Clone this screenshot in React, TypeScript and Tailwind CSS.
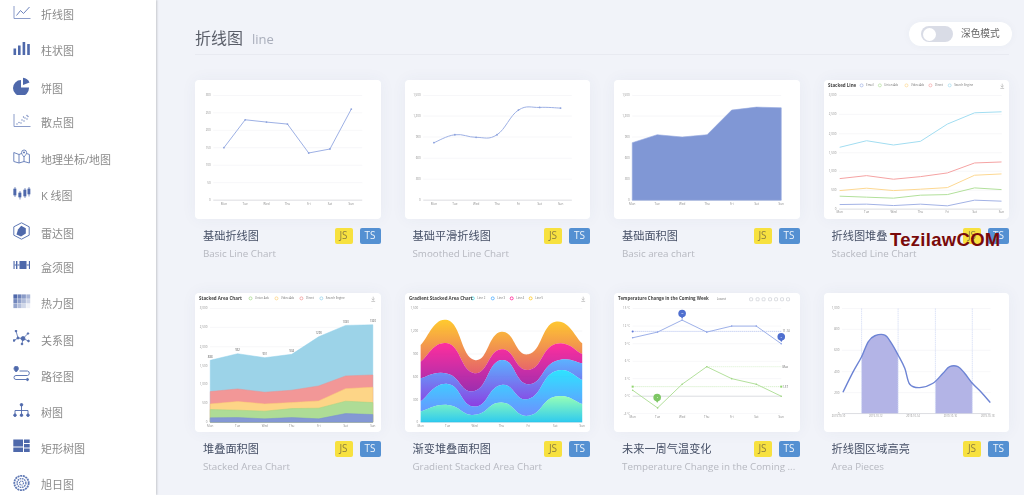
import type { ReactNode } from 'react'

type Pt = [number, number]

const days = ['Mon', 'Tue', 'Wed', 'Thu', 'Fri', 'Sat', 'Sun']

function zip(xs: number[], ys: number[]): Pt[] {
  return xs.map((x, i) => [x, ys[i]])
}

function linePath(pts: Pt[]) {
  return pts.map((p, i) => `${i ? 'L' : 'M'}${p[0]} ${p[1]}`).join(' ')
}

function smoothPath(pts: Pt[], k = 0.2) {
  let d = `M${pts[0][0]} ${pts[0][1]}`
  for (let i = 0; i < pts.length - 1; i++) {
    const p0 = pts[i - 1] ?? pts[i]
    const p1 = pts[i]
    const p2 = pts[i + 1]
    const p3 = pts[i + 2] ?? p2
    const c1x = p1[0] + (p2[0] - p0[0]) * k
    const c1y = p1[1] + (p2[1] - p0[1]) * k
    const c2x = p2[0] - (p3[0] - p1[0]) * k
    const c2y = p2[1] - (p3[1] - p1[1]) * k
    d += ` C${c1x} ${c1y} ${c2x} ${c2y} ${p2[0]} ${p2[1]}`
  }
  return d
}

function Grid({ ys, labels, x1, x2 }: { ys: number[]; labels: string[]; x1: number; x2: number }) {
  return (
    <g>
      {ys.map((y, i) => (
        <g key={y}>
          <line x1={x1} x2={x2} y1={y} y2={y} stroke={i === ys.length - 1 ? '#c4c6cc' : '#f1f2f5'} strokeWidth="0.6" />
          <text x={x1 - 2.5} y={y + 1} fontSize="3" fill="#8e8e8e" textAnchor="end">{labels[i]}</text>
        </g>
      ))}
    </g>
  )
}

function Days({ xs, y }: { xs: number[]; y: number }) {
  return (
    <g>
      {days.map((d, i) => (
        <text key={d} x={xs[i]} y={y} fontSize="3" fill="#8e8e8e" textAnchor="middle">{d}</text>
      ))}
    </g>
  )
}

function ChartSvg({ children }: { children: ReactNode }) {
  return (
    <svg viewBox="0 0 186 139" className="block w-full h-full">
      {children}
    </svg>
  )
}

function Legend({ title, items, x }: { title: string; items: [string, string, number][]; x: number }) {
  return (
    <g>
      {items.map(([name, color, ox]) => (
        <g key={name}>
          <circle cx={x + ox} cy="5.2" r="1.5" fill="none" stroke={color} strokeWidth="0.7" />
          <text x={x + ox + 4.5} y="6.2" fontSize="2.9" fill="#777">{name}</text>
        </g>
      ))}
      <text x="4" y="7" fontSize="4.5" fontWeight="700" fill="#444">{title}</text>
      <path d="M178.7 3.5V7M177.2 5.6L178.7 7L180.2 5.6M176.8 8.3H180.6" fill="none" stroke="#aaa" strokeWidth="0.6" />
    </g>
  )
}

function BasicLine() {
  const xs = [29, 50.3, 71.7, 92.7, 114, 135.3, 156.7]
  const pts = zip(xs, [67.7, 39.7, 42, 44, 73, 69, 29])
  return (
    <ChartSvg>
      <Grid x1={18.3} x2={167.7} ys={[15.3, 32.7, 50.3, 67.7, 85.3, 102.7, 120.3]} labels={['300', '250', '200', '150', '100', '50', '0']} />
      <Days xs={xs} y={124.8} />
      <path d={linePath(pts)} fill="none" stroke="#9db0e4" strokeWidth="1" />
      {pts.map((p) => <circle key={p[0]} cx={p[0]} cy={p[1]} r="0.9" fill="#8ea3dd" />)}
    </ChartSvg>
  )
}

function SmoothLine() {
  const xs = [29, 50, 71.3, 92.3, 113.7, 135, 156]
  const pts = zip(xs, [62.7, 54.7, 57.3, 54.7, 30, 27.3, 28])
  return (
    <ChartSvg>
      <Grid x1={18.3} x2={167.3} ys={[15.3, 36, 57, 78.3, 99.3, 120.3]} labels={['1,500', '1,200', '900', '600', '300', '0']} />
      <Days xs={xs} y={124.8} />
      <path d={smoothPath(pts)} fill="none" stroke="#9db0e4" strokeWidth="1" />
      {pts.map((p) => <circle key={p[0]} cx={p[0]} cy={p[1]} r="0.9" fill="#8ea3dd" />)}
    </ChartSvg>
  )
}

function BasicArea() {
  const xs = [18.3, 43.3, 68.3, 93.3, 118, 143, 167.7]
  const pts = zip(xs, [62.7, 54.7, 57, 54.7, 30, 27, 27.7])
  return (
    <ChartSvg>
      <Grid x1={18.3} x2={167.7} ys={[15.3, 36, 57, 78.3, 99.3, 120.3]} labels={['1,500', '1,200', '900', '600', '300', '0']} />
      <Days xs={xs} y={124.8} />
      <path d={`${linePath(pts)} L167.7 120.3 L18.3 120.3 Z`} fill="#8097d5" stroke="#93a7df" strokeWidth="0.6" />
    </ChartSvg>
  )
}

const stackGrid = [15.3, 34.3, 53.7, 72.7, 91.3, 110.3, 129.3]
const stackLabels = ['3,000', '2,500', '2,000', '1,500', '1,000', '500', '0']

function StackedLine() {
  const xs = [15.7, 42.7, 69.7, 96.7, 123.7, 151, 178]
  const series: [string, number[]][] = [
    ['#a2ddf1', [67.3, 60.7, 65, 61.3, 44, 32.7, 31.7]],
    ['#f5a3a3', [98.7, 95.7, 99.3, 96.7, 93, 83, 82]],
    ['#fdd892', [110.7, 108.3, 110.7, 109.3, 107.7, 95.3, 94]],
    ['#b2e09b', [116.3, 117.3, 118.3, 115.3, 114.7, 108, 109.7]],
    ['#a2b2e5', [124.7, 124.3, 125.7, 124.3, 126, 120.3, 121.3]],
  ]
  return (
    <ChartSvg>
      <Legend
        title="Stacked Line"
        x={37.7}
        items={[
          ['Email', '#a2b2e5', 0],
          ['Union Ads', '#b2e09b', 18.3],
          ['Video Ads', '#fdd892', 45],
          ['Direct', '#f5a3a3', 69],
          ['Search Engine', '#a2ddf1', 88.3],
        ]}
      />
      <Grid x1={15} x2={178.3} ys={stackGrid} labels={stackLabels} />
      <Days xs={xs} y={133.6} />
      {series.map(([color, ys]) => (
        <path key={color} d={linePath(zip(xs, ys))} fill="none" stroke={color} strokeWidth="1" />
      ))}
    </ChartSvg>
  )
}

function StackedArea() {
  const xs = [15.3, 42.7, 70, 97, 124, 151, 178.3]
  const series: [string, string, number[]][] = [
    ['#9cd3e8', '#8fd0ea', [67.3, 60.7, 64.7, 61.3, 43.7, 32.3, 31.7]],
    ['#f29797', '#ee8f8f', [98.7, 96, 99.3, 97.3, 93, 83, 82]],
    ['#fdd587', '#fdcf78', [111, 108.7, 111, 109.7, 108, 95.7, 94.3]],
    ['#aedc96', '#9fd685', [116.7, 117.3, 118.3, 115.7, 115.3, 108.3, 109.7]],
    ['#8498d4', '#7a90d2', [125, 124.7, 126, 124.7, 126, 120.7, 121.7]],
  ]
  const tops = ['888', '932', '901', '934', '1290', '1330', '1320']
  return (
    <ChartSvg>
      <Legend
        title="Stacked Area Chart"
        x={46}
        items={[
          ['Union Ads', '#9fd685', 9.7],
          ['Video Ads', '#fdcf78', 35.7],
          ['Direct', '#ee8f8f', 60.7],
          ['Search Engine', '#8fd0ea', 80.7],
        ]}
      />
      <Grid x1={15} x2={178.3} ys={stackGrid} labels={stackLabels} />
      <Days xs={xs} y={134} />
      {series.map(([fill, stroke, ys]) => (
        <path key={fill} d={`${linePath(zip(xs, ys))} L178.3 129.3 L15.3 129.3 Z`} fill={fill} stroke={stroke} strokeWidth="0.5" />
      ))}
      {tops.map((t, i) => (
        <text key={t} x={xs[i]} y={series[0][2][i] - 2.5} fontSize="2.8" fill="#555" textAnchor="middle">{t}</text>
      ))}
    </ChartSvg>
  )
}

function GradientArea() {
  const xs = [15.7, 42.7, 69.7, 96.7, 123.7, 150.7, 177.7]
  const layers: [string, string, string, number[]][] = [
    ['ga', '#ffbf00', '#e03e4c', [52, 27, 67, 38.7, 61.3, 28.7, 50.3]],
    ['gb', '#ff0087', '#87009d', [68.7, 50.3, 80.3, 56.3, 77, 51, 61]],
    ['gc', '#37a2ff', '#7415db', [85.3, 80.7, 98, 67, 91.3, 68.3, 70.3]],
    ['gd', '#00ddff', '#4d77ff', [108.7, 91, 113.7, 92, 106, 78.3, 87]],
    ['ge', '#80ffa5', '#01bfec', [118.7, 112, 122, 109.7, 123, 103.7, 111]],
  ]
  const band = (i: number) => {
    const top = smoothPath(zip(xs, layers[i][3]), 0.25)
    const next = layers[i + 1]
    if (!next) return `${top} L177.7 129.3 L15.7 129.3 Z`
    const under = zip(xs, next[3]).reverse()
    return `${top} L${smoothPath(under, 0.25).slice(1)} Z`
  }
  return (
    <ChartSvg>
      <defs>
        {layers.map(([id, a, b]) => (
          <linearGradient key={id} id={id} x1="0" x2="0" y1="0" y2="1">
            <stop offset="0" stopColor={a} />
            <stop offset="1" stopColor={b} />
          </linearGradient>
        ))}
      </defs>
      <Legend
        title="Gradient Stacked Area Chart"
        x={62}
        items={[
          ['Line 2', '#37d5e8', 6],
          ['Line 3', '#37a2ff', 26],
          ['Line 4', '#ff0087', 45],
          ['Line 5', '#ffbf00', 64],
        ]}
      />
      <Grid x1={15.7} x2={177.7} ys={[15.3, 38, 61, 83.7, 106.7, 129.3]} labels={['1,500', '1,200', '900', '600', '300', '0']} />
      <Days xs={xs} y={134} />
      {layers.map(([id], i) => (
        <path key={id} d={band(i)} fill={`url(#${id})`} fillOpacity="0.82" />
      ))}
    </ChartSvg>
  )
}

function Pin({ x, y, color, label }: { x: number; y: number; color: string; label: string }) {
  return (
    <g>
      <path d={`M${x - 3.4} ${y - 1} L${x} ${y + 5.5} L${x + 3.4} ${y - 1} Z`} fill={color} />
      <circle cx={x} cy={y} r="3.8" fill={color} />
      <text x={x} y={y + 0.9} fontSize="2.4" fill="#fff" textAnchor="middle">{label}</text>
    </g>
  )
}

function Temperature() {
  const xs = [18.7, 43.7, 68.3, 93, 118, 142.7, 167.7]
  const high = zip(xs, [44.7, 39, 27, 39, 33, 33, 50.7])
  const low = zip(xs, [97.3, 115, 91.3, 73.7, 85.7, 91.3, 103.3])
  const ys = [15.3, 33, 50.7, 68.3, 85.7, 103.3, 120.7]
  const labels = ['15 °C', '12 °C', '9 °C', '6 °C', '3 °C', '0 °C', '-3 °C']
  return (
    <ChartSvg>
      <text x="4" y="7" fontSize="4.4" fontWeight="700" fill="#444">Temperature Change in the Coming Week</text>
      <text x="103" y="6.6" fontSize="2.8" fill="#777">Lowest</text>
      <g fill="none" stroke="#b9bcc4" strokeWidth="0.5">
        {[136, 142.5, 148.5, 155, 161, 167, 173].map((x) => <rect key={x} x={x} y="4.6" width="3" height="3" rx="0.6" />)}
      </g>
      {ys.map((y, i) => (
        <g key={y}>
          <line x1={18.7} x2={167.7} y1={y} y2={y} stroke={i === 5 ? '#c4c6cc' : '#f1f2f5'} strokeWidth="0.6" />
          <text x="16" y={y + 1} fontSize="2.8" fill="#8e8e8e" textAnchor="end">{labels[i]}</text>
        </g>
      ))}
      <Days xs={xs} y={125} />
      <line x1="18.7" x2="167.7" y1="38.3" y2="38.3" stroke="#8ea3e6" strokeWidth="0.7" strokeDasharray="1 1" />
      <circle cx="18.7" cy="38.3" r="1" fill="#5f79d6" />
      <text x="169" y="39" fontSize="2.8" fill="#666">11.14</text>
      <line x1="18.7" x2="167.7" y1="93.7" y2="93.7" stroke="#b7e3a3" strokeWidth="0.7" strokeDasharray="1 1" />
      <rect x="17.7" y="92.7" width="2" height="2" fill="#91d56f" />
      <rect x="166.7" y="92.7" width="2" height="2" fill="#91d56f" />
      <text x="169" y="94.7" fontSize="2.8" fill="#666">1.57</text>
      <line x1="93" x2="167.7" y1="73.7" y2="73.7" stroke="#c8eab8" strokeWidth="0.7" strokeDasharray="1 1" />
      <text x="169" y="74.7" fontSize="2.8" fill="#666">Max</text>
      <path d={linePath(high)} fill="none" stroke="#9db0e8" strokeWidth="1" />
      <path d={linePath(low)} fill="none" stroke="#b3e09c" strokeWidth="1" />
      {high.map((p) => <circle key={p[0]} cx={p[0]} cy={p[1]} r="0.8" fill="#8ea3e6" />)}
      {low.map((p) => <circle key={p[0]} cx={p[0]} cy={p[1]} r="0.8" fill="#9fd685" />)}
      <Pin x={68.3} y={20.3} color="#4f6fcf" label="13" />
      <Pin x={167.7} y={43.7} color="#4f6fcf" label="9" />
      <Pin x={43.3} y={104.7} color="#7ec765" label="-2" />
    </ChartSvg>
  )
}

function AreaPieces() {
  const pts: Pt[] = [[19, 99.3], [29.3, 78.7], [37.7, 63.7], [44.3, 48.7], [51, 42.7], [61, 42], [67.7, 50.3], [74.3, 62], [81, 75.3], [86, 91.3], [96, 94.7], [109.3, 90.3], [119.3, 80.3], [126, 73.7], [134.3, 73.7], [141, 80.3], [148.7, 90.3], [157.7, 99.3], [166.7, 109.7]]
  const d = smoothPath(pts, 0.17)
  return (
    <ChartSvg>
      <defs>
        <clipPath id="pieces">
          <path d={`${d} L166.7 120.7 L19 120.7 Z`} />
        </clipPath>
      </defs>
      <Grid x1={18} x2={167} ys={[15.3, 36.3, 57.3, 78.7, 99.7, 120.7]} labels={['1,000', '800', '600', '400', '200', '0']} />
      {['2019-10-10', '2019-10-12', '2019-10-14', '2019-10-16', '2019-10-18'].map((t, i) => (
        <text key={t} x={14.5 + i * 37.4} y="124.6" fontSize="2.6" fill="#8e8e8e" textAnchor="middle">{t}</text>
      ))}
      <g clipPath="url(#pieces)" fill="#b3b4e6">
        <rect x="37.7" y="15" width="36.6" height="106" />
        <rect x="111.7" y="15" width="37" height="106" />
      </g>
      {[37.7, 74.3, 111.7, 148.7].map((x) => (
        <line key={x} x1={x} x2={x} y1="15.3" y2="120.7" stroke="#d3dcf5" strokeWidth="0.8" strokeDasharray="1.5 0.6" />
      ))}
      <path d={d} fill="none" stroke="#6d84d4" strokeWidth="1.4" />
    </ChartSvg>
  )
}

const iconColor = '#4f69ab'

function Axes() {
  return <path d="M1 1V13.5H17.5" fill="none" stroke="#7f92c4" strokeWidth="0.9" />
}

const sidebarItems: { name: string; icon: ReactNode; textClass?: string }[] = [
  {
    name: '折线图',
    icon: (
      <>
        <Axes />
        <path d="M3.5 10.5L7.5 5.5L10.5 8.5L16.5 2" fill="none" stroke="#6c82bb" strokeWidth="1" />
      </>
    ),
  },
  {
    name: '柱状图',
    icon: (
      <g fill={iconColor}>
        <rect x="0.5" y="7.5" width="2.6" height="6.5" />
        <rect x="5" y="4.5" width="2.6" height="9.5" />
        <rect x="9.6" y="1" width="2.6" height="13" />
        <rect x="14.2" y="3" width="2.6" height="11" />
      </g>
    ),
  },
  {
    name: '饼图',
    textClass: 'pt-[3px]',
    icon: (
      <g fill={iconColor}>
        <path d="M8 2.4V10H16A8 8 0 1 1 8 2.4Z" transform="translate(0 0.6)" />
        <path d="M10 0.8A8 8 0 0 1 16.5 5.5L10 8Z" />
      </g>
    ),
  },
  {
    name: '散点图',
    icon: (
      <>
        <Axes />
        <g fill="#6c82bb">
          {[[4, 11], [6, 9.5], [8, 10], [9, 7], [11, 8], [12, 5], [14, 6], [15, 3.5], [14, 2.5], [10.5, 4]].map(([x, y]) => (
            <circle key={`${x}-${y}`} cx={x} cy={y} r="0.65" />
          ))}
        </g>
      </>
    ),
  },
  {
    name: '地理坐标/地图',
    icon: (
      <g fill="none" stroke="#6079b5" strokeWidth="0.9">
        <path d="M0.8 3.5L6 5.5L11 3.5L16.4 5.5V14L11 12.5L6 14L0.8 12.5Z" />
        <path d="M6 5.5V14M11 8V12.5" />
        <path d="M11 8C9.4 6 8.6 5 8.6 3.5A2.5 2.5 0 0 1 13.6 3.5C13.6 5 12.6 6 11 8Z" fill="#fff" />
        <circle cx="11" cy="3.4" r="0.9" fill={iconColor} stroke="none" />
      </g>
    ),
  },
  {
    name: 'K 线图',
    icon: (
      <g fill={iconColor} stroke={iconColor} strokeWidth="0.7">
        <path d="M2 1V11M7 5V13.5M12 2V12M16 1V10.5" fill="none" />
        <rect x="0.8" y="3" width="2.2" height="6" />
        <rect x="5.8" y="7" width="2.2" height="4" />
        <rect x="10.8" y="4" width="2.2" height="6" />
        <rect x="14.9" y="3" width="2.1" height="5" />
      </g>
    ),
  },
  {
    name: '雷达图',
    textClass: 'pt-[4px]',
    icon: (
      <>
        <path d="M8.5 0.8L16.2 4.8V13.2L8.5 17.2L0.8 13.2V4.8Z" fill="none" stroke="#5f78b4" strokeWidth="1" />
        <path d="M8.2 3.8L12.8 6.2V11.5L8 14.6L3.5 12.5L5 7.5Z" fill={iconColor} />
      </>
    ),
  },
  {
    name: '盒须图',
    icon: (
      <g fill={iconColor}>
        <rect x="0.5" y="3" width="1.1" height="8" />
        <rect x="3" y="3" width="1.4" height="8" />
        <rect x="1.6" y="6.5" width="1.4" height="1" />
        <rect x="6.5" y="3" width="7" height="8" />
        <rect x="4.4" y="6.5" width="2.1" height="1" />
        <rect x="13.5" y="6.5" width="2.4" height="1" />
        <rect x="15.9" y="3" width="1.1" height="8" />
      </g>
    ),
  },
  {
    name: '热力图',
    icon: (
      <g fill={iconColor}>
        {[0, 1, 2, 3].flatMap((c) =>
          [0, 1, 2].map((r) => (
            <rect key={`${c}-${r}`} x={0.4 + c * 4.3} y={0.4 + r * 4.7} width="3.9" height="4.3" opacity={1 - c * 0.17 - r * 0.2} />
          )),
        )}
      </g>
    ),
  },
  {
    name: '关系图',
    icon: (
      <g fill={iconColor} stroke={iconColor} strokeWidth="0.8">
        <path d="M3 1L5 8L1 10.5M5 8L10 8.5L15 3.5M10 8.5L15.5 11M10 8.5L9 14" fill="none" />
        <circle cx="3" cy="1" r="0.9" />
        <circle cx="5" cy="8" r="1.1" />
        <circle cx="1" cy="10.5" r="0.9" />
        <circle cx="10" cy="8.5" r="2" />
        <circle cx="15" cy="3.5" r="0.8" />
        <circle cx="15.5" cy="11" r="0.9" />
        <circle cx="9" cy="14" r="0.9" />
      </g>
    ),
  },
  {
    name: '路径图',
    icon: (
      <g fill="none" stroke="#5f78b4" strokeWidth="1">
        <path d="M3.2 6C1.6 4.4 1 3.5 1 2.5A2.2 2.2 0 0 1 5.4 2.5C5.4 3.5 4.8 4.4 3.2 6Z" fill={iconColor} />
        <path d="M6.5 5H14.5A2.3 2.3 0 0 1 14.5 9.5H3A2 2 0 0 0 3 13.5H14" />
        <path d="M14 12L16 13.5L14 15Z" fill={iconColor} />
      </g>
    ),
  },
  {
    name: '树图',
    icon: (
      <g fill={iconColor} stroke={iconColor} strokeWidth="0.9">
        <path d="M8.5 2V12M2 12V7.5H15V12" fill="none" />
        <circle cx="8.5" cy="1.8" r="1.3" />
        <circle cx="2" cy="12.2" r="1.3" />
        <circle cx="8.5" cy="12.2" r="1.3" />
        <circle cx="15" cy="12.2" r="1.3" />
      </g>
    ),
  },
  {
    name: '矩形树图',
    icon: (
      <g fill={iconColor}>
        <rect x="0.3" y="0.5" width="9.7" height="7" />
        <rect x="11" y="0.5" width="5.7" height="3.5" />
        <rect x="11" y="5" width="5.7" height="3.5" />
        <rect x="0.3" y="8.5" width="9.7" height="4.5" />
        <rect x="11" y="9.5" width="5.7" height="3.5" />
      </g>
    ),
  },
  {
    name: '旭日图',
    icon: (
      <g fill="none" stroke="#6079b5">
        <circle cx="8.5" cy="8" r="7.2" strokeWidth="1.8" strokeDasharray="2 0.7" />
        <circle cx="8.5" cy="8" r="4.4" strokeWidth="1.4" strokeDasharray="1.6 0.7" />
        <circle cx="8.5" cy="8" r="2" strokeWidth="1.2" strokeDasharray="1.2 0.6" />
      </g>
    ),
  },
]

const cards: { title: string; sub: string; chart: ReactNode }[] = [
  { title: '基础折线图', sub: 'Basic Line Chart', chart: <BasicLine /> },
  { title: '基础平滑折线图', sub: 'Smoothed Line Chart', chart: <SmoothLine /> },
  { title: '基础面积图', sub: 'Basic area chart', chart: <BasicArea /> },
  { title: '折线图堆叠', sub: 'Stacked Line Chart', chart: <StackedLine /> },
  { title: '堆叠面积图', sub: 'Stacked Area Chart', chart: <StackedArea /> },
  { title: '渐变堆叠面积图', sub: 'Gradient Stacked Area Chart', chart: <GradientArea /> },
  { title: '未来一周气温变化', sub: 'Temperature Change in the Coming ...', chart: <Temperature /> },
  { title: '折线图区域高亮', sub: 'Area Pieces', chart: <AreaPieces /> },
]

function Sidebar() {
  return (
    <aside className="w-[156px] h-full shrink-0 bg-white overflow-hidden shadow-[1px_0_2px_rgba(0,0,0,0.18)] z-10">
      <ul className="-mt-[3px]">
        {sidebarItems.map((item) => (
          <li key={item.name} className="h-[36.2px] flex items-center pl-[13px]">
            <svg viewBox="0 0 18 18" className="w-[18px] h-[18px] -mt-[3px] shrink-0">
              {item.icon}
            </svg>
            <span className={`ml-[10px] text-[11px] text-[#8a8a8a] ${item.textClass ?? ''}`}>{item.name}</span>
          </li>
        ))}
      </ul>
    </aside>
  )
}

function Card({ title, sub, chart }: { title: string; sub: string; chart: ReactNode }) {
  return (
    <div className="min-w-0">
      <div className="h-[139px] bg-white rounded-[4px] shadow-[0_0_16px_rgba(60,70,110,0.05)] overflow-hidden">{chart}</div>
      <div className="flex items-center justify-between mt-[9px] h-[16px]">
        <span className="pl-2 text-[11.2px] text-[#465066]">{title}</span>
        <div className="flex gap-[7px]">
          <span className="w-[18px] h-[15.5px] rounded-[2px] bg-[#f7e13f] text-[#8f8040] text-[10px] leading-[15.5px] text-center">JS</span>
          <span className="w-[21px] h-[15.5px] rounded-[2px] bg-[#5490d2] text-[#eef4fb] text-[10px] leading-[15.5px] text-center">TS</span>
        </div>
      </div>
      <p className="pl-2 mt-[3px] text-[9.8px] leading-[14px] text-[#b6b8c0] whitespace-nowrap">{sub}</p>
    </div>
  )
}

export default function App() {
  return (
    <div className="relative w-[1024px] h-[495px] overflow-hidden bg-[#f1f3f9] font-['Open_Sans','Noto_Sans_CJK_SC',sans-serif]">
      <div className="flex h-full blur-[0.45px]">
        <Sidebar />
        <main className="relative flex-1 min-w-0 pl-[39px] pr-[15px]">
          <header className="h-[55px] flex items-end pb-[5px] border-b border-[#e8eaf1]">
            <h1 className="text-[16px] leading-[22px] font-normal text-[#5a5e69]">折线图</h1>
            <span className="ml-[9px] text-[13px] leading-[20px] text-[#a9aebb]">line</span>
          </header>
          <div className="absolute top-[22px] right-[12px] w-[103px] h-[24px] rounded-full bg-white flex items-center pl-[12px] shadow-[0_0_8px_rgba(60,70,110,0.04)]">
            <div className="w-[32px] h-[16px] rounded-full bg-[#d9dce6] p-[1.5px]">
              <div className="w-[13px] h-[13px] rounded-full bg-white" />
            </div>
            <span className="ml-[8px] text-[9.7px] text-[#666]">深色模式</span>
          </div>
          <div className="grid grid-cols-4 gap-x-[24px] gap-y-[32px] mt-[25px]">
            {cards.map((c) => (
              <Card key={c.title} title={c.title} sub={c.sub} chart={c.chart} />
            ))}
          </div>
        </main>
      </div>
      <div className="absolute left-[890px] top-[229px] text-[18.5px] leading-[22px] font-bold tracking-[0.3px] text-[#7a0a0a] font-['Liberation_Sans',sans-serif]">TezilawCOM</div>
    </div>
  )
}
